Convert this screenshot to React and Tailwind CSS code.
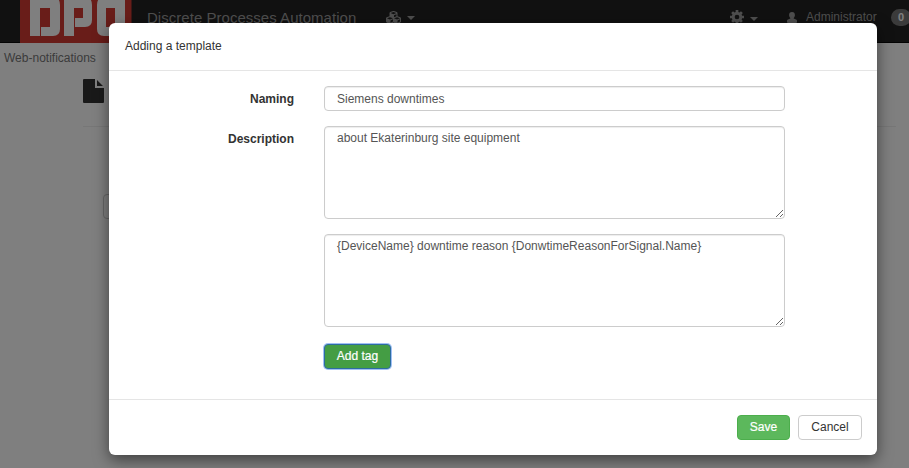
import { FaCubes } from "react-icons/fa";

const field =
  "block w-full border border-[#ccc] rounded-[4px] bg-white px-3 text-[12px] text-[#555] leading-[17px] outline-none shadow-[inset_0_1px_1px_rgba(0,0,0,0.075)]";

function Caret() {
  return <span className="block w-0 h-0 border-x-4 border-x-transparent border-t-4 border-t-[#9d9d9d]" />;
}

function Gear() {
  return (
    <svg className="shrink-0" width="14" height="14" viewBox="-7 -7 14 14" fill="none" stroke="#9d9d9d">
      <circle r="3.8" strokeWidth="2.9" />
      <path strokeWidth="2.7" d="M0-7V-4.5M0 7V4.5M-7 0H-4.5M7 0H4.5M-4.9-4.9L-3.3-3.3M4.9 4.9L3.3 3.3M-4.9 4.9L-3.3 3.3M4.9-4.9L3.3-3.3" />
    </svg>
  );
}

function Logo() {
  return (
    <svg className="block shrink-0" width="112" height="43" viewBox="0 0 112 43">
      <rect width="111.5" height="43" fill="#d23a32" />
      <g fill="#fff" fillRule="evenodd">
        <path d="M10 -4H34Q40 -2 40 5V29Q40 36 33 36H21V27H30V8H20V36H10Z" />
        <path d="M44 -4H66Q72 -2 72 5V20Q72 27 65 27H55V18H63V8H54V36H44Z" />
        <path d="M83 -4H105V36H84Q77 36 77 29V5Q77 -2 83 -4ZM86 8V27H95V8Z" />
      </g>
    </svg>
  );
}

function Navbar() {
  return (
    <header className="flex h-[43px] bg-[#222] border-b border-[#080808] pl-5 text-[#9d9d9d]">
      <div className="h-[43px] shrink-0"><Logo /></div>
      <div className="flex flex-1 h-[34px] items-center">
        <span className="ml-[15px] w-[239px] pt-[2px] text-[15px] tracking-[0.03px] whitespace-nowrap">Discrete Processes Automation</span>
        <FaCubes size={15} />
        <span className="ml-[6px] mt-[2px]"><Caret /></span>
      </div>
      <div className="flex h-[34px] items-center w-[179px] shrink-0">
        <Gear />
        <span className="ml-[6px] mt-[3px] shrink-0"><Caret /></span>
        <svg className="ml-[29px] shrink-0" width="10" height="11" viewBox="0 0 10 11" fill="#9d9d9d">
          <path d="M5 0C3 0 2.1 1.3 2.1 3C2.1 4.5 2.7 5.4 3.3 6V6.6L1 7.4Q0 7.8 0 8.8V10Q0 11 1 11H9Q10 11 10 10V8.8Q10 7.8 9 7.4L6.7 6.6V6C7.3 5.4 7.9 4.5 7.9 3C7.9 1.3 7 0 5 0Z" />
        </svg>
        <span className="ml-[9px] w-[85px] shrink-0 text-[12px]">Administrator</span>
        <span className="shrink-0 w-5 h-[17px] rounded-full bg-[#777] text-white text-[11px] font-bold text-center leading-[17px]">0</span>
      </div>
    </header>
  );
}

function Page() {
  return (
    <div className="h-[468px] bg-white overflow-hidden">
      <Navbar />
      <div className="pl-1 pt-[7px] h-[36px] text-[12px] leading-[17px] text-[#777]">Web-notifications</div>
      <div className="ml-[83px] mr-[13px] h-[48px] border-b border-[#eee]">
        <svg width="21" height="24" viewBox="0 0 21 24" fill="#333">
          <path d="M1 0H12V9H21V23Q21 24 20 24H1Q0 24 0 23V1Q0 0 1 0ZM14 1L20 7H14Z" />
        </svg>
      </div>
      <div className="ml-[103px] mt-[67px] w-24 h-[25px] border border-[#ccc] rounded-[4px]" />
    </div>
  );
}

function Row({ label, children }) {
  return (
    <div className="flex">
      <div className="w-[185px] mr-[30px] pt-[5px] text-right font-bold leading-[17px]">{label}</div>
      <div className="w-[461px]">{children}</div>
    </div>
  );
}

function Modal() {
  return (
    <div className="absolute left-[109px] top-[23px] w-[768px] h-[432px] flex flex-col bg-white rounded-[6px] shadow-[0_5px_15px_rgba(0,0,0,0.5)] text-[12px] text-[#333]">
      <div className="h-[48px] pl-4 pt-[15px] leading-[17px] border-b border-[#e5e5e5]">Adding a template</div>
      <div className="flex-1 flex flex-col gap-[15px] pt-[15px]">
        <Row label="Naming">
          <input className={field + " h-[25px]"} defaultValue="Siemens downtimes" />
        </Row>
        <Row label="Description">
          <textarea className={field + " h-[93px] pt-[3px] resize"} defaultValue="about Ekaterinburg site equipment" />
        </Row>
        <Row>
          <textarea className={field + " h-[93px] pt-[3px] resize"} defaultValue="{DeviceName} downtime reason {DonwtimeReasonForSignal.Name}" />
        </Row>
        <Row>
          <button className="block mt-[2px] w-[67px] h-[25px] rounded-[4px] border border-[#2d6da0] bg-[#449d44] text-white leading-[17px] shadow-[0_0_0_1px_#a0c0f5] [-webkit-text-stroke:0.2px_white]">Add tag</button>
        </Row>
      </div>
      <div className="h-[56px] flex justify-end gap-2 pt-[15px] pr-[15px] border-t border-[#e5e5e5]">
        <button className="w-[53px] h-[25px] rounded-[4px] border border-[#4cae4c] bg-[#5cb85c] text-white leading-[17px] [-webkit-text-stroke:0.2px_white]">Save</button>
        <button className="w-[64px] h-[25px] rounded-[4px] border border-[#ccc] bg-white leading-[17px]">Cancel</button>
      </div>
    </div>
  );
}

export default function App() {
  return (
    <div className="relative w-[909px] h-[468px] overflow-hidden font-['Liberation_Sans',Arial,sans-serif]">
      <Page />
      <div className="absolute inset-0 bg-black/50" />
      <Modal />
    </div>
  );
}
